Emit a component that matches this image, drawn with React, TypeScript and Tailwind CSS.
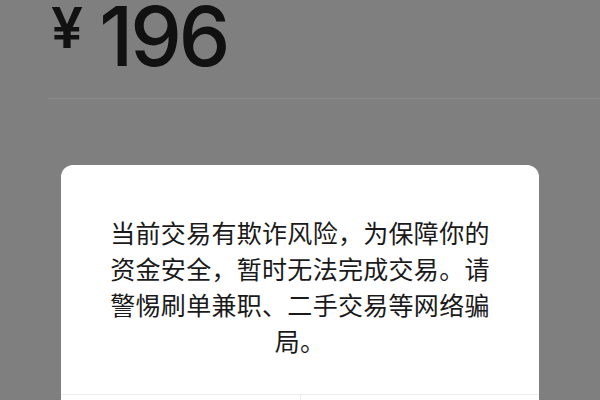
import React from "react";

export default function App() {
  return (
    <div className="w-[600px] h-[400px] overflow-hidden bg-[#7f7f7f] flex flex-col" style={{ fontFamily: '"Noto Sans", "Noto Sans CJK SC", sans-serif' }}>
      <div className="h-[98px] pl-[51px] flex items-start">
        <div className="flex items-start text-[#111111]" style={{ fontFamily: 'Inter, "Noto Sans", sans-serif' }}>
          <span className="text-[57px] leading-[0.8] font-semibold mt-[5px]">¥</span>
          <span className="text-[82px] leading-[0.8] ml-[16px] tracking-[-3px] font-medium mt-[4px]">196</span>
        </div>
      </div>
      <div className="ml-[48px] h-px bg-[#8a8a8a]" />
      <div className="mt-[66px] mx-[61px] bg-white rounded-t-[12px] flex-1 flex flex-col">
        <div className="pt-[49px] flex justify-center">
          <p className="w-[386px] text-center text-[25px] leading-[36px] tracking-[0.3px] text-[#1a1a1a]" style={{ fontFamily: '"Noto Sans CJK SC", sans-serif' }}>
            当前交易有欺诈风险，为保障你的资金安全，暂时无法完成交易。请警惕刷单兼职、二手交易等网络骗局。
          </p>
        </div>
        <div className="mt-auto mb-[-12px] h-[18px] border-t border-[#ececec] flex">
          <div className="flex-1 border-r border-[#ececec]" />
          <div className="flex-1" />
        </div>
      </div>
    </div>
  );
}
